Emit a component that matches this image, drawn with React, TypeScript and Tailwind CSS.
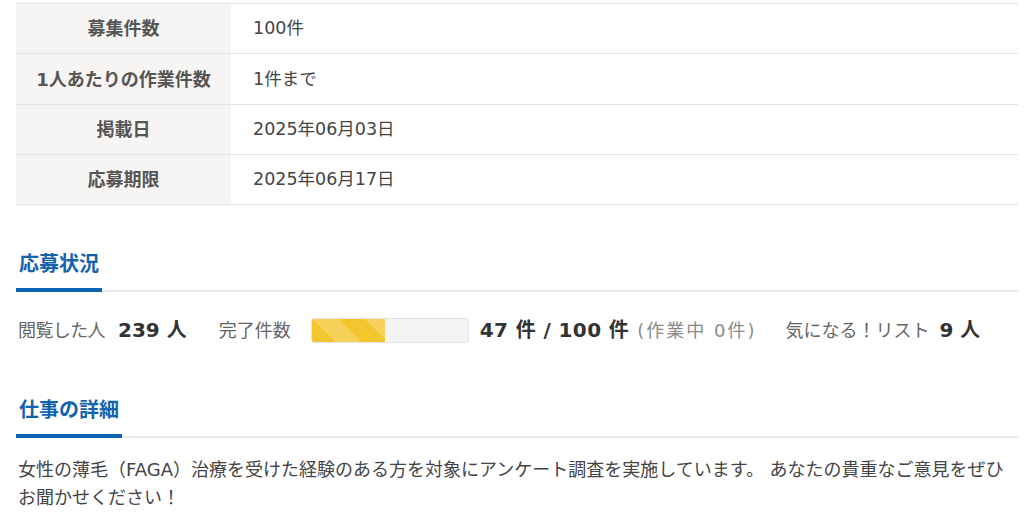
import React from "react";

const rows: { label: string; value: string; h: string }[] = [
  { label: "募集件数", value: "100件", h: "h-[49px]" },
  { label: "1人あたりの作業件数", value: "1件まで", h: "h-[50px]" },
  { label: "掲載日", value: "2025年06月03日", h: "h-[49px]" },
  { label: "応募期限", value: "2025年06月17日", h: "h-[49px]" },
];

function Heading({ title }: { title: string }) {
  return (
    <div className="border-b-2 border-[#e9e9e9]">
      <h2 className="inline-block -mb-[2px] border-b-4 border-[#0b64b5] px-[3px] pb-[10px] text-[20px] leading-[28px] font-bold text-[#1262ad]">
        {title}
      </h2>
    </div>
  );
}

export default function App() {
  const pct = 47;
  return (
    <div
      className="w-[1024px] h-[516px] overflow-hidden bg-white px-4 pt-[3px] text-[#444]"
      style={{ fontFamily: '"DejaVu Sans", "Noto Sans CJK JP", sans-serif' }}
    >
      <div className="w-[1002px] border-t border-[#e4e4e4]">
        {rows.map((r) => (
          <div key={r.label} className={`flex ${r.h} border-b border-[#e4e4e4] box-content`}>
            <div className="w-[215px] flex items-center justify-center bg-[#f6f5f3] text-[18px] font-bold text-[#555]">
              {r.label}
            </div>
            <div className="flex items-center pl-[22px] text-[17.5px] text-[#444]">{r.value}</div>
          </div>
        ))}
      </div>

      <div className="mt-[45px] w-[1002px]">
        <Heading title="応募状況" />
      </div>

      <div className="mt-[24px] flex h-[28px] items-center text-[18px] text-[#666]">
        <span className="ml-[2px] tracking-[-0.6px]">閲覧した人</span>
        <span className="ml-[13px] text-[20px] font-bold text-[#333]">239 人</span>
        <span className="ml-[32px]">完了件数</span>
        <span className="ml-[20px] relative h-[25px] w-[158px] overflow-hidden rounded-[3px] border border-[#e3e3e3] bg-[#f3f3f3]">
          <span
            className="absolute left-0 top-0 h-full"
            style={{
              width: `${pct}%`,
              backgroundColor: "#f3c62f",
              backgroundImage:
                "linear-gradient(45deg, rgba(255,255,255,0.2) 25%, transparent 25%, transparent 50%, rgba(255,255,255,0.2) 50%, rgba(255,255,255,0.2) 75%, transparent 75%, transparent)",
              backgroundSize: "52px 52px",
            }}
          />
        </span>
        <span className="ml-[11px] text-[20px] font-bold text-[#333] tracking-[0.4px]">47 件 / 100 件</span>
        <span className="ml-[8px] text-[#8a8a8a] tracking-[2px]">(作業中 0件)</span>
        <span className="ml-[29px]">気になる！リスト</span>
        <span className="ml-[10px] text-[20px] font-bold text-[#333]">9 人</span>
      </div>

      <div className="mt-[52px] w-[1002px]">
        <Heading title="仕事の詳細" />
      </div>

      <p className="mt-[18px] w-[1002px] pl-[2px] text-[18px] leading-[28px] text-[#444]">
        女性の薄毛（FAGA）治療を受けた経験のある方を対象にアンケート調査を実施しています。 あなたの貴重なご意見をぜひお聞かせください！
      </p>
    </div>
  );
}
